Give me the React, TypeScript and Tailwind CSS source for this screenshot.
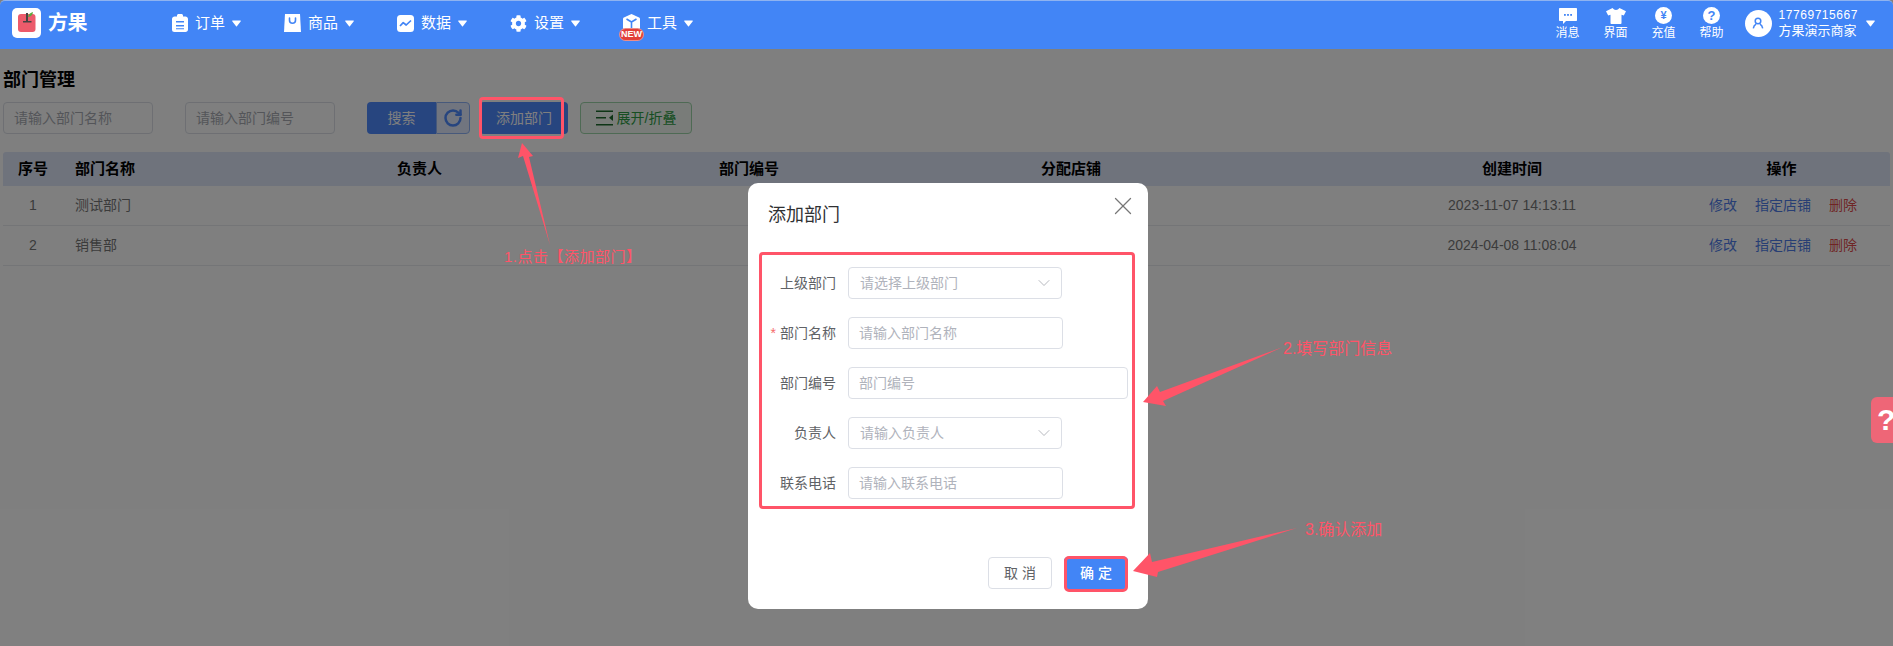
import { ChevronDown, RotateCw, X } from 'lucide-react';
import { FaCog } from 'react-icons/fa';
import type { ReactNode } from 'react';

function Caret({ className = '' }: { className?: string }) {
  return (
    <svg className={className} width="9" height="7" viewBox="0 0 9 7" fill="white">
      <path d="M.6.5h7.8c.4 0 .6.4.4.7L4.9 6.3a.5.5 0 0 1-.8 0L.2 1.2C0 .9.2.5.6.5z" />
    </svg>
  );
}

function ClipboardIcon() {
  return (
    <svg width="16" height="18" viewBox="0 0 16 18">
      <path fill="white" d="M2.5 2.5H5V1.6C5 .7 5.7 0 6.6 0h2.8c.9 0 1.600.7 1.600 1.600v.9h2.500c1.200 0 2.500 1 2.500 2.500v10.500c0 1.400-1.100 2.500-2.500 2.500h-11A2.500 2.500 0 0 1 0 15.500V5c0-1.500 1.300-2.500 2.500-2.500z" />
      <path fill="#4285f6" d="M4 7h8v1.500H4zM4 11h8v1.500H4zM4 14.200h8v1H4z" />
    </svg>
  );
}

function BagIcon() {
  return (
    <svg width="17" height="18" viewBox="0 0 17 18">
      <path fill="white" d="M1 0h15l1 18H0z" />
      <path fill="none" stroke="#4285f6" strokeWidth="1.6" strokeLinecap="round" d="M5.500 4v2.200a3 3 0 0 0 6 0V4" />
    </svg>
  );
}

function ChartIcon() {
  return (
    <svg width="17" height="17" viewBox="0 0 17 17">
      <rect width="17" height="17" rx="3.5" fill="white" />
      <path fill="none" stroke="#4285f6" strokeWidth="1.7" strokeLinejoin="round" d="M3 11l3.200-3.400 3 2.400L14 5.500" />
    </svg>
  );
}

function BoxIcon() {
  return (
    <svg width="17" height="19" viewBox="0 0 17 19">
      <path fill="white" d="M8.500 0l7.600 3.600c.6.3.9.8.9 1.400v9c0 .6-.3 1.100-.9 1.400L8.500 19 .9 15.400C.3 15.100 0 14.600 0 14V5c0-.6.3-1.100.9-1.400z" />
      <path fill="none" stroke="#4285f6" strokeWidth="1.6" d="M3.500 5l5 3 5-3M8.500 8v6" />
    </svg>
  );
}

function AppleLogo() {
  return (
    <svg width="30" height="30" viewBox="0 0 30 30">
      <rect width="29" height="30" rx="5" fill="white" />
      <rect x="6" y="6" width="17.500" height="18" rx="3" fill="#ec5b6b" />
      <rect x="14" y="5" width="2" height="9" fill="#444" />
      <rect x="11" y="13" width="8.500" height="1.500" fill="#444" />
      <path d="M16 9c.4-2.600 2.300-4.300 5-5-.3 2.800-2 4.800-5 5z" fill="#5da83c" />
    </svg>
  );
}

function MessageIcon() {
  return (
    <svg width="18" height="16" viewBox="0 0 18 16">
      <path fill="white" d="M1 0h16c.6 0 1 .4 1 1v11c0 .6-.4 1-1 1H7l-3 3v-3H1c-.6 0-1-.4-1-1V1c0-.6.4-1 1-1z" />
      <rect x="5" y="6" width="1.800" height="1.800" fill="#4285f6" />
      <rect x="8.100" y="6" width="1.800" height="1.800" fill="#4285f6" />
      <rect x="11.200" y="6" width="1.800" height="1.800" fill="#4285f6" />
    </svg>
  );
}

function ShirtIcon() {
  return (
    <svg width="20" height="16" viewBox="0 0 20 16">
      <path fill="white" d="M6.500 0c1 1.300 2.100 1.900 3.500 1.900S12.500 1.300 13.500 0L20 3.200 17.800 7.500l-2.300-.8V15c0 .6-.4 1-1 1h-9c-.6 0-1-.4-1-1V6.700l-2.300.8L0 3.200z" />
    </svg>
  );
}

function AvatarIcon() {
  return (
    <svg width="12" height="12" viewBox="0 0 12 12" fill="none" stroke="#4285f6" strokeWidth="1.500">
      <circle cx="6" cy="4" r="2.800" />
      <path d="M1.300 11.300c.4-2.500 2-3.800 2.800-4.200M10.700 11.300c-.4-2.500-2-3.800-2.800-4.200" />
    </svg>
  );
}

function ExpandIcon() {
  return (
    <svg width="18" height="16" viewBox="0 0 18 16" fill="#1d6a2c">
      <rect x="0" y="0.500" width="17" height="1.500" />
      <rect x="0" y="7" width="10" height="1.500" />
      <rect x="0" y="14" width="17" height="1.500" />
      <path d="M17 4.500v6.500l-4-3.200z" />
    </svg>
  );
}

function NavItem({ icon, label, badge }: { icon: ReactNode; label: string; badge?: boolean }) {
  return (
    <div className="w-[113px] flex items-center">
      <div className="relative w-[17px] h-[19px] flex items-center justify-center">
        {icon}
        {badge && (
          <span className="absolute left-[-4px] top-[14px] w-[25px] h-[13px] rounded-full bg-[#e2403a] border border-white/40 text-white text-[9px] leading-[11px] font-bold text-center">
            NEW
          </span>
        )}
      </div>
      <span className="ml-[7px] text-[15px] text-white">{label}</span>
      <Caret className="ml-[7px]" />
    </div>
  );
}

function NavTool({ icon, label }: { icon: ReactNode; label: string }) {
  return (
    <div className="w-[48px] flex flex-col items-center">
      <div className="h-[18px] flex items-center justify-center">{icon}</div>
      <span className="mt-[1px] text-[12px] leading-[14px] text-white">{label}</span>
    </div>
  );
}

function Field({ label, required, children }: { label: string; required?: boolean; children: ReactNode }) {
  return (
    <div className="flex items-center h-[32px]">
      <label className="w-[80px] pr-[12px] text-right text-[14px] text-[#606266] whitespace-nowrap">
        {required && <span className="text-[#f56c6c] mr-[4px]">*</span>}
        {label}
      </label>
      {children}
    </div>
  );
}

function SelectBox({ placeholder }: { placeholder: string }) {
  return (
    <div className="w-[214px] h-[32px] px-[11px] flex items-center justify-between border border-[#dcdfe6] rounded-[4px] text-[14px] text-[#b0b3bc]">
      <span>{placeholder}</span>
      <ChevronDown size={20} strokeWidth={1} className="text-[#a8abb2] mr-[-4px]" />
    </div>
  );
}

function TextInput({ placeholder, className }: { placeholder: string; className: string }) {
  return (
    <input
      placeholder={placeholder}
      className={`h-[32px] px-[10px] border border-[#dcdfe6] rounded-[4px] text-[14px] outline-none placeholder:text-[#b0b3bc] ${className}`}
    />
  );
}

const rows = [
  { no: 1, name: '测试部门', time: '2023-11-07 14:13:11' },
  { no: 2, name: '销售部', time: '2024-04-08 11:08:04' },
];

export default function App() {
  return (
    <div className="relative w-[1893px] h-[646px] overflow-hidden bg-white font-['Liberation_Sans','Noto_Sans_CJK_SC',sans-serif]">
      <div className="absolute inset-0 bg-[#808080]" />

      {/* page under the dialog */}
      <main className="absolute inset-x-0 top-[49px] bottom-0 bg-white px-[3px]">
        <h1 className="pt-[19px] text-[18px] leading-[24px] font-bold text-black">部门管理</h1>
        <div className="mt-[10px] flex items-center h-[32px]">
          <input
            placeholder="请输入部门名称"
            className="w-[150px] h-[32px] px-[10px] border border-[#dcdfe6] rounded-[4px] text-[14px] outline-none placeholder:text-[#a8abb2]"
          />
          <input
            placeholder="请输入部门编号"
            className="ml-[32px] w-[150px] h-[32px] px-[10px] border border-[#dcdfe6] rounded-[4px] text-[14px] outline-none placeholder:text-[#a8abb2]"
          />
          <button className="ml-[32px] w-[69px] h-[32px] bg-[#4e8aff] rounded-l-[4px] text-white text-[14px]">搜索</button>
          <button className="w-[34px] h-[32px] bg-[#e2ebff] border border-[#8fb3f6] rounded-r-[4px] flex items-center justify-center text-[#4e8aff]">
            <RotateCw size={20} strokeWidth={3} />
          </button>
          <button className="ml-[10px] w-[88px] h-[32px] bg-[#4e8aff] rounded-[4px] text-white text-[14px]">添加部门</button>
          <button className="ml-[12px] w-[112px] h-[32px] bg-[#f2f9f3] border border-[#9dd4a8] rounded-[4px] flex items-center justify-center gap-[3px] text-[#2e9c44] text-[14px]">
            <ExpandIcon />
            <span>展开/折叠</span>
          </button>
        </div>

        <div className="mt-[18px] w-[1887px]">
          <div className="grid grid-cols-[60px_322px_322px_322px_322px_322px_217px] items-center h-[34px] bg-[#dfe6f8] rounded-t-[3px] text-[15px] font-semibold text-black">
            <div className="text-center">序号</div>
            <div className="pl-[12px]">部门名称</div>
            <div className="pl-[12px]">负责人</div>
            <div className="pl-[12px]">部门编号</div>
            <div className="pl-[12px]">分配店铺</div>
            <div className="text-center">创建时间</div>
            <div className="text-center">操作</div>
          </div>
          {rows.map((row) => (
            <div
              key={row.no}
              className="grid grid-cols-[60px_322px_322px_322px_322px_322px_217px] items-center h-[40px] border-b border-[#e8eaee] text-[14px] text-[#777]"
            >
              <div className="text-center">{row.no}</div>
              <div className="pl-[12px]">{row.name}</div>
              <div />
              <div />
              <div />
              <div className="text-center">{row.time}</div>
              <div className="pl-[36px] flex">
                <span className="text-[#4e7ce8]">修改</span>
                <span className="ml-[18px] text-[#4e7ce8]">指定店铺</span>
                <span className="ml-[18px] text-[#e04a4a]">删除</span>
              </div>
            </div>
          ))}
        </div>
      </main>

      {/* dimming layer */}
      <div className="absolute inset-x-0 top-[49px] bottom-0 bg-black/50" />

      <header className="absolute inset-x-0 top-0 h-[49px] pb-[4px] flex items-center bg-[#4285f6] border-t border-[#8fb3f0] rounded-t-[5px]">
        <div className="ml-[12px]">
          <AppleLogo />
        </div>
        <span className="ml-[6px] text-[20px] font-bold text-white tracking-[-0.5px]">方果</span>
        <nav className="ml-[84px] flex">
          <NavItem icon={<ClipboardIcon />} label="订单" />
          <NavItem icon={<BagIcon />} label="商品" />
          <NavItem icon={<ChartIcon />} label="数据" />
          <NavItem icon={<FaCog size={17} color="white" />} label="设置" />
          <NavItem icon={<BoxIcon />} label="工具" badge />
        </nav>
        <div className="ml-auto flex items-center pr-[18px]">
          <NavTool icon={<MessageIcon />} label="消息" />
          <NavTool icon={<ShirtIcon />} label="界面" />
          <NavTool
            icon={
              <span className="w-[17px] h-[17px] rounded-full bg-white text-[#4285f6] text-[11px] leading-[17px] text-center font-bold">
                ¥
              </span>
            }
            label="充值"
          />
          <NavTool
            icon={
              <span className="w-[17px] h-[17px] rounded-full bg-white text-[#4285f6] text-[13px] leading-[17px] text-center font-bold">
                ?
              </span>
            }
            label="帮助"
          />
          <div className="ml-[9px] w-[27px] h-[27px] rounded-full bg-white flex items-center justify-center">
            <AvatarIcon />
          </div>
          <div className="ml-[7px] flex flex-col text-white">
            <span className="text-[12px] leading-[16px] tracking-[0.55px]">17769715667</span>
            <span className="text-[13px] leading-[16px]">方果演示商家</span>
          </div>
          <Caret className="ml-[8px]" />
        </div>
      </header>

      {/* add-department dialog */}
      <div className="absolute left-[748px] top-[183px] w-[400px] h-[426px] bg-white rounded-[10px] pt-[20px] px-[20px] pb-[20px] flex flex-col">
        <div className="flex items-start justify-between h-[24px]">
          <h2 className="text-[18px] leading-[24px] text-[#303133]">添加部门</h2>
          <X size={30} strokeWidth={1} className="text-[#777] mt-[-12px] mr-[-10px]" />
        </div>
        <form className="mt-[40px] flex flex-col gap-[18px]">
          <Field label="上级部门">
            <SelectBox placeholder="请选择上级部门" />
          </Field>
          <Field label="部门名称" required>
            <TextInput placeholder="请输入部门名称" className="w-[215px]" />
          </Field>
          <Field label="部门编号">
            <TextInput placeholder="部门编号" className="w-[280px]" />
          </Field>
          <Field label="负责人">
            <SelectBox placeholder="请输入负责人" />
          </Field>
          <Field label="联系电话">
            <TextInput placeholder="请输入联系电话" className="w-[215px]" />
          </Field>
        </form>
        <div className="mt-auto flex justify-end gap-[12px]">
          <button className="w-[64px] h-[32px] border border-[#dcdfe6] rounded-[4px] text-[14px] text-[#606266]">取 消</button>
          <button className="relative w-[64px] h-[32px] bg-[#4285f6] rounded-[4px] text-[14px] font-medium text-white">
            确 定
            <span className="absolute left-0 right-0 top-[-1px] bottom-[-3px] border-[3px] border-[#ff5468] rounded-[5px]" />
          </button>
        </div>
        <div className="absolute left-[11px] top-[69px] w-[376px] h-[257px] border-[3px] border-[#ff5468] rounded-[4px]" />
      </div>

      {/* help tab */}
      <div className="absolute right-0 top-[397px] w-[22px] h-[46px] overflow-hidden bg-[#ee6677] rounded-l-[6px] pl-[6px] text-white text-[30px] leading-[46px] font-bold">
        ?
      </div>

      {/* tutorial marks on top of the screenshot */}
      <div className="absolute left-[479px] top-[97px] w-[85px] h-[42px] border-[3px] border-[#ff5468] rounded-[4px]" />
      <svg className="absolute inset-0 pointer-events-none" width="1893" height="646" fill="#ff5468">
        <polygon points="522,143 533,156 529,157 550,245 523,156 518,158" />
        <polygon points="1143,402 1157,386 1160,392 1283,347 1163,401 1166,406" />
        <polygon points="1133,571 1150,553 1152,562 1297,528 1158,572 1157,577" />
      </svg>
      <span className="absolute left-[504px] top-[246px] text-[15px] leading-[22px] tracking-[0.5px] text-[#ff5468]">1.点击【添加部门】</span>
      <span className="absolute left-[1283px] top-[338px] text-[16px] leading-[22px] text-[#ff5468]">2.填写部门信息</span>
      <span className="absolute left-[1305px] top-[519px] text-[16px] leading-[22px] text-[#ff5468]">3.确认添加</span>
    </div>
  );
}
